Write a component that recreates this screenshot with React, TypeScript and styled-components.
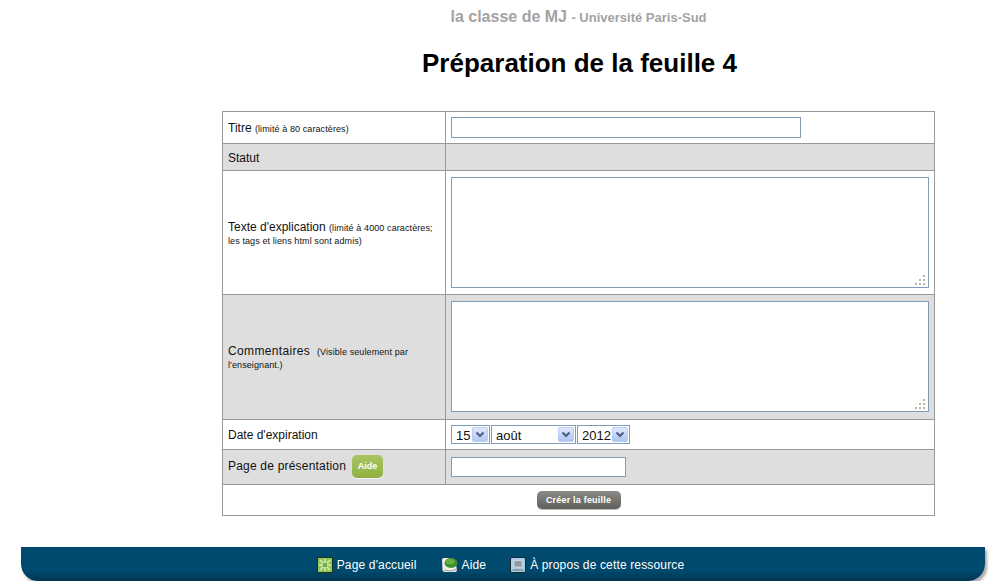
import styled, { createGlobalStyle } from 'styled-components';

const GlobalStyle = createGlobalStyle`
  html, body {
    margin: 0;
    padding: 0;
    background: #fff;
    font-family: "Liberation Sans", Arial, sans-serif;
    color: #111;
  }
`;

const Page = styled.div`
  width: 998px;
  height: 581px;
  overflow: hidden;
  display: flex;
  flex-direction: column;
`;

const Main = styled.main`
  width: 713px;
  height: 547px;
  margin-left: 222px;
  display: flex;
  flex-direction: column;
  align-items: center;
`;

const Brand = styled.div`
  margin-top: 8px;
  height: 18px;
  line-height: 18px;
  font-size: 16px;
  font-weight: bold;
  color: #a3a3a3;
  white-space: nowrap;
`;

const BrandSub = styled.span`
  font-size: 13px;
`;

const Title = styled.h1`
  margin: 20px 0 31px;
  padding-left: 2px;
  height: 34px;
  line-height: 34px;
  font-size: 26px;
  font-weight: bold;
  color: #000;
  white-space: nowrap;
`;

const FormTable = styled.table`
  width: 713px;
  border-collapse: collapse;
  table-layout: fixed;
  border: 1px solid #999;
`;

const Row = styled.tr<{ $h: number; $shaded?: boolean }>`
  height: ${({ $h }) => $h}px;
  background: ${({ $shaded }) => ($shaded ? '#dedede' : '#fff')};
`;

const LabelCell = styled.td`
  box-sizing: border-box;
  border: 1px solid #999;
  padding: 2px 5px 0;
  font-size: 12px;
  line-height: 13px;
  vertical-align: middle;
`;

const FieldCell = styled.td`
  box-sizing: border-box;
  border: 1px solid #999;
  padding: 0 5px;
  vertical-align: middle;
`;

const TextAreaCell = styled(FieldCell)`
  padding-top: 6px;
  vertical-align: top;
`;

const ActionCell = styled.td`
  border: 1px solid #999;
  text-align: center;
  vertical-align: middle;
`;

const BigLabel = styled.span`
  letter-spacing: 0.35px;
`;

const Hint = styled.span`
  font-size: 9px;
  line-height: 1;
  letter-spacing: 0.1px;
`;

const TextInput = styled.input<{ $w: number; $h: number }>`
  display: block;
  box-sizing: border-box;
  width: ${({ $w }) => $w}px;
  height: ${({ $h }) => $h}px;
  padding: 0 3px;
  border: 1px solid #7f9db9;
  background: #fff;
  outline: none;
`;

const TextArea = styled.div`
  position: relative;
  box-sizing: border-box;
  width: 478px;
  height: 111px;
  border: 1px solid #7f9db9;
  background: #fff;
`;

const Grip = styled.svg`
  position: absolute;
  right: 2px;
  bottom: 2px;
  width: 11px;
  height: 11px;
`;

const DateRow = styled.div`
  display: flex;
  gap: 1px;
`;

const Select = styled.div<{ $w: number }>`
  box-sizing: border-box;
  width: ${({ $w }) => $w}px;
  height: 19px;
  display: flex;
  align-items: center;
  justify-content: space-between;
  border: 1px solid #7f9db9;
  padding: 1px 1px 0 4px;
  background: #fff;
  font-size: 13px;
  color: #111;
`;

const SelectArrow = styled.span`
  width: 16px;
  height: 15px;
  margin-top: -1px;
  border: 1px solid #b9cdf2;
  border-radius: 2px;
  background: linear-gradient(#e1e9fb, #aec5f2);
  box-sizing: border-box;
  display: flex;
  align-items: center;
  justify-content: center;
`;

const LabelRow = styled.div`
  display: flex;
  align-items: center;
  gap: 6px;
  margin-bottom: 4px;
  letter-spacing: 0.2px;
`;

const HelpBadge = styled.span`
  width: 31px;
  height: 23px;
  border-radius: 5px;
  background: linear-gradient(#a8c664, #8fb13f);
  box-shadow: 0 1px 1px #f3f3f3;
  color: #fff;
  font-size: 9px;
  font-weight: bold;
  letter-spacing: 0;
  display: flex;
  align-items: center;
  justify-content: center;
`;

const SubmitButton = styled.button`
  height: 18px;
  width: 84px;
  padding: 0;
  border: none;
  border-radius: 5px;
  background: linear-gradient(#8a8a86, #5f5f5b);
  box-shadow: 0 1px 0 #bbb;
  color: #fff;
  font-family: inherit;
  font-size: 9px;
  font-weight: bold;
  letter-spacing: 0.2px;
  vertical-align: middle;
`;

const Footer = styled.footer`
  width: 964px;
  height: 34px;
  margin-left: 21px;
  display: flex;
  align-items: center;
  justify-content: center;
  padding: 1px 5px 0 0;
  box-sizing: border-box;
  gap: 24px;
  border-radius: 0 0 17px 17px;
  background: linear-gradient(#004a6e 0, #004a6e 70%, #00354f 100%);
  box-shadow: 2px 3px 3px rgba(0, 0, 0, 0.35);
  color: #fff;
  font-size: 12px;
  letter-spacing: 0.15px;
`;

const FooterLink = styled.a`
  display: flex;
  align-items: center;
  gap: 4px;
  white-space: nowrap;
`;

const Arrow = () => (
  <svg width="10" height="7" viewBox="0 0 10 7">
    <path d="M1.5 1.5 L5 5 L8.5 1.5" fill="none" stroke="#4d6185" strokeWidth="2.2" />
  </svg>
);

const HomeIcon = () => (
  <svg width="16" height="16" viewBox="0 0 16 16">
    <rect x="0.5" y="0.5" width="15" height="15" fill="#8fc65a" stroke="#23331f" />
    <path d="M8 2v12M2 8h12M3 3l10 10M13 3L3 13" stroke="#d9f0bd" strokeWidth="1.4" />
    <rect x="6" y="6" width="4" height="4" fill="#6fae45" />
  </svg>
);

const HelpIcon = () => (
  <svg width="17" height="16" viewBox="0 0 17 16">
    <path d="M1 2.5 Q1 1 3 1 L8 1 L15 8 L16 13 Q16 15 14 15 L4 15 Q1.5 15 1.5 13 Z" fill="#efefe9" />
    <path d="M3 13 Q10 15.5 16 12" fill="none" stroke="#9a9a92" strokeWidth="1" />
    <ellipse cx="10" cy="6" rx="6.5" ry="5" fill="#3f8f2a" />
    <ellipse cx="9" cy="4.5" rx="4.5" ry="2.8" fill="#64b13f" />
  </svg>
);

const AboutIcon = () => (
  <svg width="16" height="16" viewBox="0 0 16 16">
    <rect x="0.5" y="0.5" width="15" height="15" rx="1.5" fill="#a9cfe6" stroke="#182a33" />
    <rect x="4" y="3.5" width="8" height="6.5" fill="#8f9a9f" stroke="#d5dfe3" strokeWidth="0.8" />
    <path d="M2.5 13h11" stroke="#7c8b92" strokeWidth="1.4" />
  </svg>
);

const ResizeGrip = () => (
  <Grip viewBox="0 0 11 11">
    <path d="M8 1h2v2H8zM4 5h2v2H4zM8 5h2v2H8zM0 9h2v2H0zM4 9h2v2H4zM8 9h2v2H8z" fill="#b9b9a8" />
  </Grip>
);

export default function App() {
  return (
    <>
      <GlobalStyle />
      <Page>
        <Main>
          <Brand>
            la classe de MJ <BrandSub>- Université Paris-Sud</BrandSub>
          </Brand>
          <Title>Préparation de la feuille 4</Title>
          <FormTable>
            <colgroup>
              <col style={{ width: 223 }} />
              <col />
            </colgroup>
            <tbody>
              <Row $h={32}>
                <LabelCell>
                  Titre <Hint>(limité à 80 caractères)</Hint>
                </LabelCell>
                <FieldCell>
                  <TextInput $w={350} $h={21} />
                </FieldCell>
              </Row>
              <Row $h={27} $shaded>
                <LabelCell>Statut</LabelCell>
                <FieldCell />
              </Row>
              <Row $h={124}>
                <LabelCell>
                  Texte d'explication <Hint>(limité à 4000 caractères; les tags et liens html sont admis)</Hint>
                </LabelCell>
                <TextAreaCell>
                  <TextArea>
                    <ResizeGrip />
                  </TextArea>
                </TextAreaCell>
              </Row>
              <Row $h={125} $shaded>
                <LabelCell>
                  <BigLabel>Commentaires</BigLabel> &nbsp;<Hint>(Visible seulement par l'enseignant.)</Hint>
                </LabelCell>
                <TextAreaCell>
                  <TextArea>
                    <ResizeGrip />
                  </TextArea>
                </TextAreaCell>
              </Row>
              <Row $h={30}>
                <LabelCell>Date d'expiration</LabelCell>
                <FieldCell>
                  <DateRow>
                    <Select $w={39}>
                      15
                      <SelectArrow>
                        <Arrow />
                      </SelectArrow>
                    </Select>
                    <Select $w={85}>
                      août
                      <SelectArrow>
                        <Arrow />
                      </SelectArrow>
                    </Select>
                    <Select $w={53}>
                      2012
                      <SelectArrow>
                        <Arrow />
                      </SelectArrow>
                    </Select>
                  </DateRow>
                </FieldCell>
              </Row>
              <Row $h={35} $shaded>
                <LabelCell>
                  <LabelRow>
                    Page de présentation
                    <HelpBadge>Aide</HelpBadge>
                  </LabelRow>
                </LabelCell>
                <FieldCell>
                  <TextInput $w={175} $h={20} />
                </FieldCell>
              </Row>
              <Row $h={31}>
                <ActionCell colSpan={2}>
                  <SubmitButton>Créer la feuille</SubmitButton>
                </ActionCell>
              </Row>
            </tbody>
          </FormTable>
        </Main>
        <Footer>
          <FooterLink>
            <HomeIcon />
            Page d'accueil
          </FooterLink>
          <FooterLink>
            <HelpIcon />
            Aide
          </FooterLink>
          <FooterLink>
            <AboutIcon />
            À propos de cette ressource
          </FooterLink>
        </Footer>
      </Page>
    </>
  );
}
